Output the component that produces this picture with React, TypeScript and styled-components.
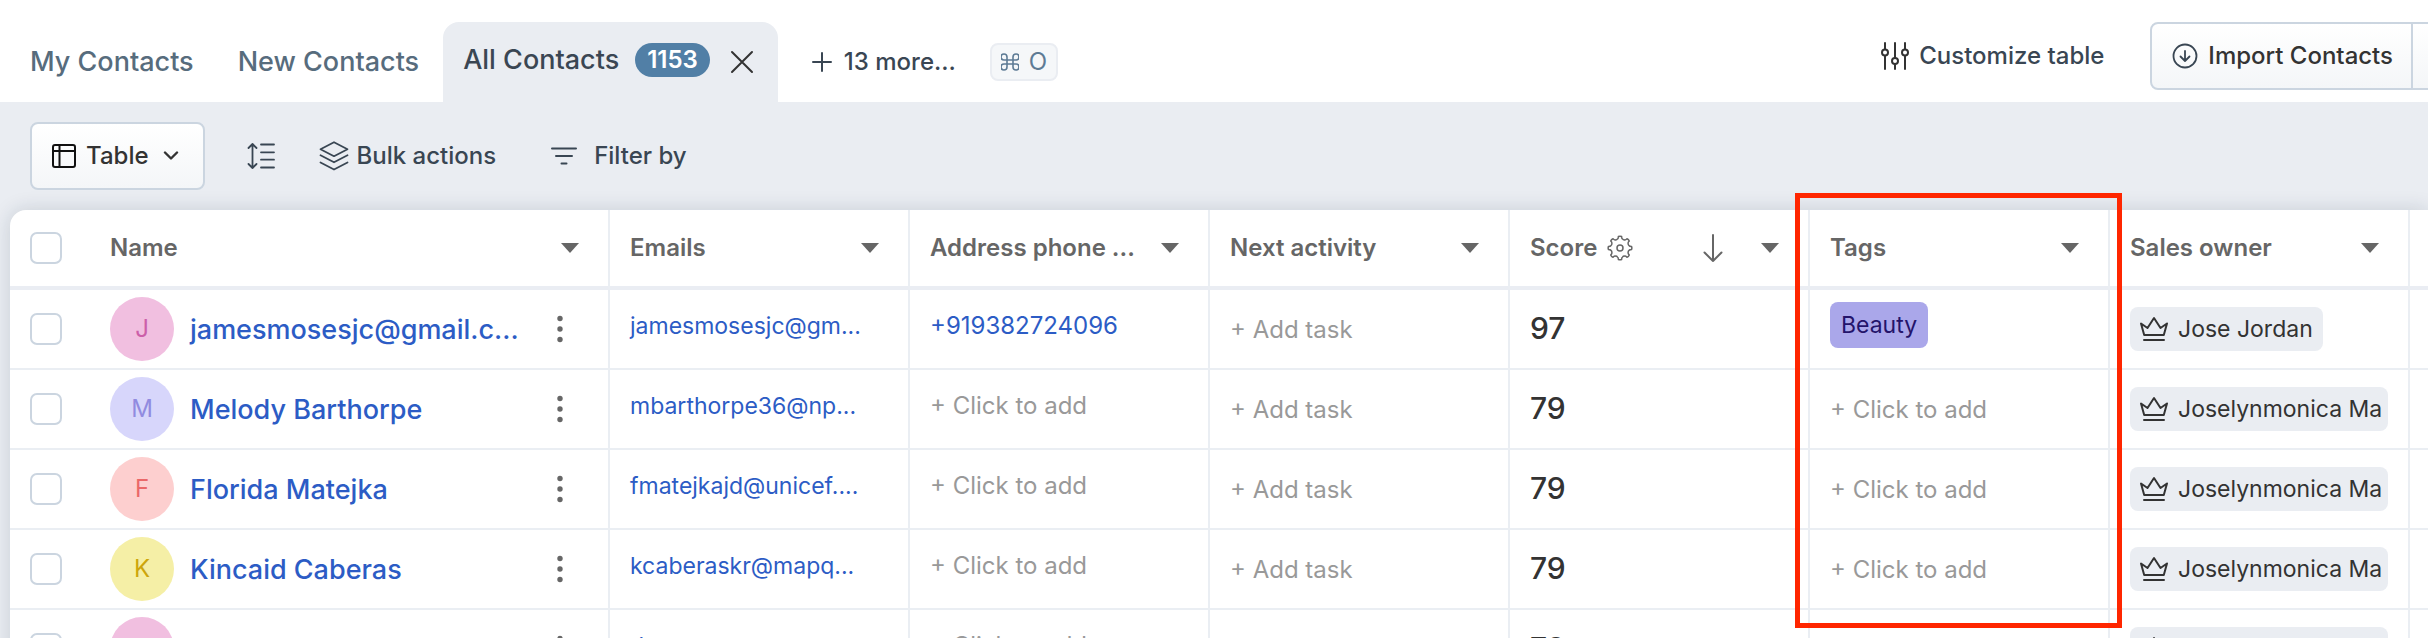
import React from "react";
import styled, { createGlobalStyle } from "styled-components";

const GlobalStyle = createGlobalStyle`
  *, *::before, *::after { box-sizing: border-box; }
  body { margin: 0; background: #eaedf2; font-family: Inter, "Liberation Sans", sans-serif; font-size: 24px; line-height: 32px; color: #333; }
  button { font: inherit; color: inherit; margin: 0; padding: 0; border: 0; background: none; cursor: pointer; }
  a { color: inherit; text-decoration: none; }
  svg { display: block; flex: none; }
`;

const Page = styled.div`
  height: 100vh;
  overflow: auto;
  scrollbar-width: none;
`;

const TopBar = styled.header`
  display: flex;
  justify-content: space-between;
  padding: 22px 0 0 10px;
  background: #fff;
  white-space: nowrap;
`;

const Tabs = styled.nav`
  display: flex;
  height: 80px;
  align-items: center;
  gap: 4px;
`;

const Tab = styled.a`
  padding: 0 20px;
  font-size: 27px;
  font-weight: 500;
  color: #576c7d;
`;

const ActiveTab = styled.div`
  display: flex;
  align-items: center;
  height: 80px;
  padding: 0 24px 0 20px;
  border-radius: 16px 16px 0 0;
  background: #eaedf2;
`;

const ActiveLabel = styled.a`
  display: flex;
  align-items: center;
  gap: 16px;
  padding-bottom: 4px;
  font-size: 27px;
  font-weight: 500;
  color: #3a4653;
`;

const Count = styled.span`
  padding: 0 12px;
  border-radius: 17px;
  background: #517fa6;
  color: #fff;
  font-size: 24px;
  font-weight: 600;
  line-height: 34px;
`;

const CloseButton = styled.button`
  margin-left: 20px;
`;

const TextButton = styled.button<{ $gap: number }>`
  display: flex;
  align-items: center;
  gap: ${(p) => p.$gap}px;
  font-weight: 500;
  color: #394653;
`;

const MoreTabs = styled.div`
  display: flex;
  align-items: center;
  gap: 34px;
  padding-left: 30px;
`;

const Shortcut = styled.kbd`
  display: flex;
  align-items: center;
  gap: 10px;
  height: 38px;
  padding: 0 9px;
  border: 2px solid #eaedf2;
  border-radius: 8px;
  background: #f5f7f9;
  font: inherit;
  color: #5e7b95;
`;

const Actions = styled.div`
  display: flex;
  height: 68px;
  align-items: stretch;
  gap: 46px;
`;

const ButtonGroup = styled.div`
  display: flex;
`;

const OutlineButton = styled.button`
  display: flex;
  align-items: center;
  gap: 10px;
  height: 68px;
  padding: 0 24px 0 20px;
  border: 2px solid #cbd5e0;
  border-radius: 8px;
  background: linear-gradient(#fff, #f4f6f8);
  font-weight: 500;
  color: #333;
`;

const ButtonText = styled.span`
  padding-right: 4px;
`;

const GroupStart = styled(OutlineButton)`
  padding: 0 18px 0 20px;
  border-radius: 8px 0 0 8px;
`;

const GroupMore = styled(OutlineButton)`
  width: 15px;
  padding: 0;
  border-width: 2px 0;
  border-radius: 0;
`;

const Toolbar = styled.div`
  display: flex;
  align-items: center;
  padding: 20px;
  padding-left: 30px;
  white-space: nowrap;
`;

const ToolGroup = styled.div`
  display: flex;
  align-items: center;
  gap: 44px;
  padding-left: 42px;
`;

const FilterSlot = styled.div`
  padding-left: 10px;
`;

const Panel = styled.main`
  position: relative;
  margin-left: 10px;
  border-top-left-radius: 16px;
  background: #fff;
  box-shadow: 0 0 20px rgba(18, 42, 66, 0.16);
`;

const Grid = styled.table`
  width: 100%;
  min-width: 2400px;
  table-layout: fixed;
  border-collapse: separate;
  border-spacing: 0;
`;

const Col = styled.col<{ $width?: number }>`
  width: ${(p) => (p.$width ? `${p.$width}px` : "auto")};
`;

const HeadCell = styled.th`
  height: 80px;
  padding: 0 29px 0 20px;
  border-right: 2px solid #eaeef3;
  border-bottom: 4px solid #eaedf3;
  text-align: left;
  font-weight: 600;
  color: #666;
  &:last-child { border-right: 0; padding: 0; }
`;

const HeadContent = styled.div`
  display: flex;
  align-items: center;
  white-space: nowrap;
`;

const HeadTools = styled.div`
  display: flex;
  align-items: center;
  gap: 34px;
  margin-left: auto;
`;

const ScoreSettings = styled.button`
  margin-left: 10px;
`;

const Cell = styled.td<{ $raised?: boolean }>`
  height: 80px;
  padding: 0 20px ${(p) => (p.$raised ? 8 : 0)}px 20px;
  border-right: 2px solid #eaeef3;
  border-bottom: 2px solid #eaeef3;
  white-space: nowrap;
  &:last-child { border-right: 0; padding: 0; }
`;

const NameContent = styled.div`
  display: flex;
  align-items: center;
`;

const Check = styled.input`
  appearance: none;
  flex: none;
  width: 32px;
  height: 32px;
  margin: 0 48px 0 0;
  border: 2px solid #cbd5e0;
  border-radius: 7px;
  background: #fff;
`;

const Avatar = styled.span<{ $bg: string; $fg: string }>`
  flex: none;
  width: 64px;
  margin-right: 16px;
  border-radius: 50%;
  background: ${(p) => p.$bg};
  color: ${(p) => p.$fg};
  font-size: 24px;
  line-height: 64px;
  text-align: center;
`;

const NameLink = styled.a`
  padding-top: 2px;
  font-size: 27px;
  font-weight: 500;
  color: #2c5cc5;
`;

const RowMenu = styled.button`
  width: 24px;
  margin: 0 16px 0 auto;
  display: flex;
  justify-content: center;
`;

const ValueLink = styled.a`
  display: block;
  padding-top: 2px;
  color: #2c5cc5;
  font-size: 24px;
`;

const EmailLink = styled(ValueLink)`
  font-size: 23px;
`;

const AddButton = styled.button`
  display: block;
  padding-top: 2px;
  color: #999;
  font-size: 24px;
`;

const Score = styled.span`
  font-size: 30px;
  font-weight: 500;
`;

const Tag = styled.span`
  display: block;
  width: fit-content;
  padding: 0 11px;
  border-radius: 8px;
  background: #aaa7ea;
  color: #24146b;
  font-size: 23px;
  line-height: 46px;
`;

const Owner = styled.span`
  display: flex;
  align-items: center;
  gap: 10px;
  width: fit-content;
  max-width: 100%;
  height: 44px;
  padding: 0 10px;
  border-radius: 8px;
  overflow: hidden;
  background: #eaedf2;
  font-size: 23px;
`;

const ColumnHighlight = styled.div`
  position: absolute;
  left: 1785px;
  top: -17px;
  width: 327px;
  height: 435px;
  border: 5px solid #ff2600;
  pointer-events: none;
`;

type IconProps = { w: number; h: number; stroke?: number; color?: string; children: React.ReactNode };

const Icon = ({ w, h, stroke = 2, color = "currentColor", children }: IconProps) => (
  <svg width={w} height={h} viewBox={`0 0 ${w} ${h}`} fill="none" stroke={color} strokeWidth={stroke} strokeLinecap="round" strokeLinejoin="round" aria-hidden="true">
    {children}
  </svg>
);

const CloseIcon = () => (
  <Icon w={24} h={24} color="#333"><path d="M2 2l20 20M22 2L2 22" /></Icon>
);
const PlusIcon = () => (
  <Icon w={20} h={20}><path d="M10 1v18M1 10h18" /></Icon>
);
const CommandIcon = () => (
  <Icon w={18} h={18} stroke={1.6}>
    <path d="M6 4v10a3 3 0 1 1-3-3h12a3 3 0 1 1-3 3V4a3 3 0 1 1 3 3H3a3 3 0 1 1 3-3z" />
  </Icon>
);
const SlidersIcon = () => (
  <Icon w={28} h={28} color="#333">
    <path d="M4 1v6M4 14v13M14 1v15M14 23v4M24 1v6M24 14v13" />
    <circle cx="4" cy="10.500" r="3" /><circle cx="14" cy="19" r="3" /><circle cx="24" cy="10.500" r="3" />
  </Icon>
);
const ImportIcon = () => (
  <Icon w={26} h={26} stroke={1.8} color="#394653">
    <circle cx="13" cy="13" r="11.5" /><path d="M13 8v10M8.500 13.500L13 18l4.500-4.500" />
  </Icon>
);
const TableIcon = () => (
  <Icon w={24} h={24} color="#111">
    <rect x="1" y="1" width="22" height="22" rx="2" /><path d="M7.500 1v22M1 7h22" />
  </Icon>
);
const ChevronIcon = () => (
  <Icon w={16} h={10} stroke={2.4}><path d="M2 1.500l6 6 6-6" /></Icon>
);
const RowHeightIcon = () => (
  <Icon w={28} h={28} stroke={1.8}>
    <path d="M5.500 2v24M1.500 6l4-4 4 4M1.500 22l4 4 4-4M14 2.500h13M14 10.300h13M14 17.700h13M14 25.500h13" />
  </Icon>
);
const LayersIcon = () => (
  <Icon w={30} h={30} stroke={1.8}>
    <path d="M15 1.200l13.500 7-13.500 7-13.500-7zM1.500 14.300l13.500 7 13.500-7M1.500 21.500l13.500 7 13.500-7" />
  </Icon>
);
const FilterIcon = () => (
  <Icon w={28} h={20}><path d="M2 2.500h24M6 10h16M11.500 17.500h5" /></Icon>
);
const CaretIcon = () => (
  <svg width="18" height="10" viewBox="0 0 18 10" fill="#666" aria-hidden="true"><path d="M0 0h18l-9 10z" /></svg>
);
const SortIcon = () => (
  <Icon w={28} h={28}><path d="M14 1v26M5.500 18.500L14 27l8.500-8.500" /></Icon>
);
const DotsIcon = () => (
  <svg width="6" height="28" viewBox="0 0 6 28" fill="#666" aria-hidden="true">
    <circle cx="3" cy="3.500" r="2.700" /><circle cx="3" cy="14" r="2.700" /><circle cx="3" cy="24.500" r="2.700" />
  </svg>
);
const CrownIcon = () => (
  <Icon w={28} h={26}>
    <path d="M1 7.500l3.200 11.500h19.600L27 7.500l-6.500 4.500L14 2l-6.500 10zM4 24h20" />
  </Icon>
);

// Eight rounded teeth, each a flat top joined to its neighbour by a shallow notch.
const gearPath = (() => {
  const at = (r: number, deg: number) => {
    const a = (deg * Math.PI) / 180;
    return `${(13 + r * Math.cos(a)).toFixed(2)} ${(13 + r * Math.sin(a)).toFixed(2)}`;
  };
  let d = `M${at(11.6, -8)}`;
  for (let i = 0; i < 8; i++) {
    const c = i * 45;
    d += `Q${at(12.2, c)} ${at(11.6, c + 8)}`;
    d += `Q${at(9.6, c + 10)} ${at(9.4, c + 15)}`;
    d += `Q${at(8.6, c + 22.5)} ${at(9.4, c + 30)}`;
    d += `Q${at(9.6, c + 35)} ${at(11.6, c + 37)}`;
  }
  return d + "Z";
})();
const GearIcon = () => (
  <Icon w={26} h={26} stroke={1.5}><path d={gearPath} /><circle cx="13" cy="13" r="3" /></Icon>
);

type Contact = {
  name: string; bg: string; fg: string; email: string; phone?: string; score: number; tag?: string; owner: string;
};

const contacts: Contact[] = [
  { name: "jamesmosesjc@gmail.c...", bg: "#f1bfe0", fg: "#cc5fa9", email: "jamesmosesjc@gm...", phone: "+919382724096", score: 97, tag: "Beauty", owner: "Jose Jordan" },
  { name: "Melody Barthorpe", bg: "#d7d6fb", fg: "#918be0", email: "mbarthorpe36@np...", score: 79, owner: "Joselynmonica Ma" },
  { name: "Florida Matejka", bg: "#fdcfcf", fg: "#ea6868", email: "fmatejkajd@unicef....", score: 79, owner: "Joselynmonica Ma" },
  { name: "Kincaid Caberas", bg: "#f5efa6", fg: "#cda50b", email: "kcaberaskr@mapq...", score: 79, owner: "Joselynmonica Ma" },
  { name: "Dino Govena", bg: "#f1bfe0", fg: "#cc5fa9", email: "dgovena@nps...", score: 79, owner: "Joselynmonica Ma" },
];

const columns = ["Emails", "Address phone ...", "Next activity", "Score", "Tags", "Sales owner"];

const ColumnMenu = ({ name }: { name: string }) => (
  <button type="button" aria-label={`${name} column menu`}><CaretIcon /></button>
);

export default function App() {
  return (
    <Page>
      <GlobalStyle />
      <TopBar>
        <Tabs>
          <Tab href="#my">My Contacts</Tab>
          <Tab href="#new">New Contacts</Tab>
          <ActiveTab>
            <ActiveLabel href="#all">All Contacts<Count>1153</Count></ActiveLabel>
            <CloseButton type="button" aria-label="Close tab"><CloseIcon /></CloseButton>
          </ActiveTab>
          <MoreTabs>
            <TextButton type="button" $gap={12}><PlusIcon />13 more...</TextButton>
            <Shortcut><CommandIcon />O</Shortcut>
          </MoreTabs>
        </Tabs>
        <Actions>
          <TextButton type="button" $gap={10}><SlidersIcon />Customize table</TextButton>
          <ButtonGroup>
            <GroupStart type="button"><ImportIcon />Import Contacts</GroupStart>
            <GroupMore type="button" aria-label="More import options" />
          </ButtonGroup>
        </Actions>
      </TopBar>

      <Toolbar>
        <OutlineButton type="button"><TableIcon /><ButtonText>Table</ButtonText><ChevronIcon /></OutlineButton>
        <ToolGroup>
          <TextButton type="button" $gap={0} aria-label="Row height"><RowHeightIcon /></TextButton>
          <TextButton type="button" $gap={8}><LayersIcon />Bulk actions</TextButton>
          <FilterSlot><TextButton type="button" $gap={16}><FilterIcon />Filter by</TextButton></FilterSlot>
        </ToolGroup>
      </Toolbar>

      <Panel>
        <Grid>
          <colgroup>
            <Col $width={600} />
            {columns.map((c) => <Col key={c} $width={300} />)}
            <Col />
          </colgroup>
          <thead>
            <tr>
              <HeadCell scope="col">
                <HeadContent>
                  <Check type="checkbox" aria-label="Select all contacts" />
                  Name
                  <HeadTools><ColumnMenu name="Name" /></HeadTools>
                </HeadContent>
              </HeadCell>
              {columns.map((c) => (
                <HeadCell key={c} scope="col">
                  <HeadContent>
                    {c}
                    {c === "Score" && <ScoreSettings type="button" aria-label="Score settings"><GearIcon /></ScoreSettings>}
                    <HeadTools>
                      {c === "Score" && <button type="button" aria-label="Sort descending"><SortIcon /></button>}
                      <ColumnMenu name={c} />
                    </HeadTools>
                  </HeadContent>
                </HeadCell>
              ))}
              <HeadCell as="td" />
            </tr>
          </thead>
          <tbody>
            {contacts.map((p) => (
              <tr key={p.name}>
                <Cell>
                  <NameContent>
                    <Check type="checkbox" aria-label={`Select ${p.name}`} />
                    <Avatar $bg={p.bg} $fg={p.fg}>{p.name[0].toUpperCase()}</Avatar>
                    <NameLink href="#contact">{p.name}</NameLink>
                    <RowMenu type="button" aria-label={`Actions for ${p.name}`}><DotsIcon /></RowMenu>
                  </NameContent>
                </Cell>
                <Cell $raised><EmailLink href="#email">{p.email}</EmailLink></Cell>
                <Cell $raised>
                  {p.phone ? <ValueLink href="#phone">{p.phone}</ValueLink> : <AddButton type="button">+ Click to add</AddButton>}
                </Cell>
                <Cell><AddButton type="button">+ Add task</AddButton></Cell>
                <Cell><Score>{p.score}</Score></Cell>
                <Cell $raised={Boolean(p.tag)}>
                  {p.tag ? <Tag>{p.tag}</Tag> : <AddButton type="button">+ Click to add</AddButton>}
                </Cell>
                <Cell><Owner><CrownIcon />{p.owner}</Owner></Cell>
                <Cell />
              </tr>
            ))}
          </tbody>
        </Grid>
        <ColumnHighlight />
      </Panel>
    </Page>
  );
}
